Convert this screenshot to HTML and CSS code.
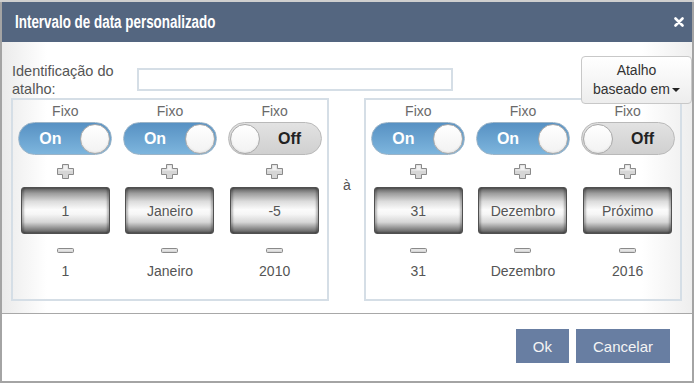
FILE: index.html
```html
<!DOCTYPE html>
<html lang="pt">
<head>
    <meta charset="UTF-8">
    <title>Intervalo de data personalizado</title>
    <link rel="stylesheet" href="styles.css">
</head>
<body>
    <div class="dialog">
        <!-- Header -->
        <div class="dialog-header">
            <div class="dialog-title">Intervalo de data personalizado</div>
            <button class="close-btn" aria-label="Fechar">
                <svg width="10" height="10" viewBox="0 0 10 10"><path d="M1.5 1.5 L8.5 8.5 M8.5 1.5 L1.5 8.5" stroke="#fff" stroke-width="2.6" stroke-linecap="round"/></svg>
            </button>
        </div>

        <!-- Body -->
        <div class="dialog-body">
            <div class="name-row">
                <label class="name-label" for="shortcutName">Identificação do atalho:</label>
                <input type="text" id="shortcutName" class="name-input">
            </div>

            <button class="base-btn">Atalho<br>baseado em<span class="caret"></span></button>

            <div class="range-row">
                <!-- From -->
                <div class="panel">
                    <div class="col">
                        <div class="fixo">Fixo</div>
                        <div class="toggle on"><span class="toggle-text">On</span><span class="knob"></span></div>
                        <button class="step"><svg width="17" height="15" viewBox="0 0 17 15"><path d="M5.5 0.5h6v4h5v6h-5v4h-6v-4h-5v-6h5z" fill="#d6d6d6" stroke="#8a8a8a"/><path d="M6.5 1.5h4v4h5v1h-9zM1.5 5.5h5v1h-5z" fill="#f2f2f2"/></svg></button>
                        <div class="spin">1</div>
                        <button class="step minus"><svg width="17" height="5" viewBox="0 0 17 5"><rect x="0.5" y="0.5" width="16" height="4" rx="1" fill="#d6d6d6" stroke="#8a8a8a"/><rect x="1.5" y="1.5" width="14" height="1" fill="#f2f2f2"/></svg></button>
                        <div class="val">1</div>
                    </div>
                    <div class="col">
                        <div class="fixo">Fixo</div>
                        <div class="toggle on"><span class="toggle-text">On</span><span class="knob"></span></div>
                        <button class="step"><svg width="17" height="15" viewBox="0 0 17 15"><path d="M5.5 0.5h6v4h5v6h-5v4h-6v-4h-5v-6h5z" fill="#d6d6d6" stroke="#8a8a8a"/><path d="M6.5 1.5h4v4h5v1h-9zM1.5 5.5h5v1h-5z" fill="#f2f2f2"/></svg></button>
                        <div class="spin">Janeiro</div>
                        <button class="step minus"><svg width="17" height="5" viewBox="0 0 17 5"><rect x="0.5" y="0.5" width="16" height="4" rx="1" fill="#d6d6d6" stroke="#8a8a8a"/><rect x="1.5" y="1.5" width="14" height="1" fill="#f2f2f2"/></svg></button>
                        <div class="val">Janeiro</div>
                    </div>
                    <div class="col">
                        <div class="fixo">Fixo</div>
                        <div class="toggle off"><span class="knob"></span><span class="toggle-text">Off</span></div>
                        <button class="step"><svg width="17" height="15" viewBox="0 0 17 15"><path d="M5.5 0.5h6v4h5v6h-5v4h-6v-4h-5v-6h5z" fill="#d6d6d6" stroke="#8a8a8a"/><path d="M6.5 1.5h4v4h5v1h-9zM1.5 5.5h5v1h-5z" fill="#f2f2f2"/></svg></button>
                        <div class="spin">-5</div>
                        <button class="step minus"><svg width="17" height="5" viewBox="0 0 17 5"><rect x="0.5" y="0.5" width="16" height="4" rx="1" fill="#d6d6d6" stroke="#8a8a8a"/><rect x="1.5" y="1.5" width="14" height="1" fill="#f2f2f2"/></svg></button>
                        <div class="val">2010</div>
                    </div>
                </div>

                <div class="range-sep">à</div>

                <!-- To -->
                <div class="panel">
                    <div class="col">
                        <div class="fixo">Fixo</div>
                        <div class="toggle on"><span class="toggle-text">On</span><span class="knob"></span></div>
                        <button class="step"><svg width="17" height="15" viewBox="0 0 17 15"><path d="M5.5 0.5h6v4h5v6h-5v4h-6v-4h-5v-6h5z" fill="#d6d6d6" stroke="#8a8a8a"/><path d="M6.5 1.5h4v4h5v1h-9zM1.5 5.5h5v1h-5z" fill="#f2f2f2"/></svg></button>
                        <div class="spin">31</div>
                        <button class="step minus"><svg width="17" height="5" viewBox="0 0 17 5"><rect x="0.5" y="0.5" width="16" height="4" rx="1" fill="#d6d6d6" stroke="#8a8a8a"/><rect x="1.5" y="1.5" width="14" height="1" fill="#f2f2f2"/></svg></button>
                        <div class="val">31</div>
                    </div>
                    <div class="col">
                        <div class="fixo">Fixo</div>
                        <div class="toggle on"><span class="toggle-text">On</span><span class="knob"></span></div>
                        <button class="step"><svg width="17" height="15" viewBox="0 0 17 15"><path d="M5.5 0.5h6v4h5v6h-5v4h-6v-4h-5v-6h5z" fill="#d6d6d6" stroke="#8a8a8a"/><path d="M6.5 1.5h4v4h5v1h-9zM1.5 5.5h5v1h-5z" fill="#f2f2f2"/></svg></button>
                        <div class="spin">Dezembro</div>
                        <button class="step minus"><svg width="17" height="5" viewBox="0 0 17 5"><rect x="0.5" y="0.5" width="16" height="4" rx="1" fill="#d6d6d6" stroke="#8a8a8a"/><rect x="1.5" y="1.5" width="14" height="1" fill="#f2f2f2"/></svg></button>
                        <div class="val">Dezembro</div>
                    </div>
                    <div class="col">
                        <div class="fixo">Fixo</div>
                        <div class="toggle off"><span class="knob"></span><span class="toggle-text">Off</span></div>
                        <button class="step"><svg width="17" height="15" viewBox="0 0 17 15"><path d="M5.5 0.5h6v4h5v6h-5v4h-6v-4h-5v-6h5z" fill="#d6d6d6" stroke="#8a8a8a"/><path d="M6.5 1.5h4v4h5v1h-9zM1.5 5.5h5v1h-5z" fill="#f2f2f2"/></svg></button>
                        <div class="spin">Próximo</div>
                        <button class="step minus"><svg width="17" height="5" viewBox="0 0 17 5"><rect x="0.5" y="0.5" width="16" height="4" rx="1" fill="#d6d6d6" stroke="#8a8a8a"/><rect x="1.5" y="1.5" width="14" height="1" fill="#f2f2f2"/></svg></button>
                        <div class="val">2016</div>
                    </div>
                </div>
            </div>
        </div>

        <!-- Footer -->
        <div class="dialog-footer">
            <button class="footer-btn">Ok</button>
            <button class="footer-btn">Cancelar</button>
        </div>
    </div>
</body>
</html>
```

FILE: styles.css
```css
* {
    margin: 0;
    padding: 0;
    box-sizing: border-box;
    font-family: "Liberation Sans", Arial, sans-serif;
}

body {
    background-color: #cfcfcf;
    width: 694px;
    height: 383px;
    overflow: hidden;
}

.dialog {
    margin-top: 2px;
    width: 694px;
    height: 381px;
    background-color: white;
    border: 2px solid #a4a4a4;
    border-top: none;
}

.dialog-header {
    background-color: #546680;
    height: 40px;
    display: flex;
    align-items: center;
    justify-content: space-between;
    padding: 0 8px 0 13px;
}

.dialog-title {
    color: white;
    font-weight: bold;
    font-size: 18px;
    transform: scaleX(0.745);
    transform-origin: left center;
}

.close-btn {
    background: none;
    border: none;
    display: flex;
    cursor: pointer;
}

.dialog-body {
    position: relative;
    height: 272px;
    padding: 20px 0 0 9px;
    background: linear-gradient(to right, #ebebeb 0, #ffffff 45px, #ffffff 640px, #eeeeee 690px);
    border-bottom: 1px solid #a8a8a8;
}

.name-row {
    display: flex;
    align-items: flex-start;
}

.name-label {
    width: 126px;
    padding-left: 1px;
    font-size: 14.5px;
    line-height: 18px;
    color: #555;
}

.name-input {
    margin-top: 6px;
    width: 316px;
    height: 23px;
    border: 2px solid #d5dee6;
    outline: none;
}

.base-btn {
    position: absolute;
    top: 14px;
    right: 0;
    width: 111px;
    height: 48px;
    border: 1px solid #c8c8c8;
    border-radius: 4px;
    background: linear-gradient(#ffffff, #ededed);
    font-size: 14px;
    line-height: 19px;
    color: #333;
    cursor: pointer;
    z-index: 2;
}

.caret {
    display: inline-block;
    margin-left: 2px;
    vertical-align: middle;
    border-top: 4px solid #222;
    border-left: 4px solid transparent;
    border-right: 4px solid transparent;
}

.range-row {
    display: flex;
}

.panel {
    width: 318px;
    height: 203px;
    border: 2px solid #d5dee6;
    display: grid;
    grid-template-columns: repeat(3, 1fr);
}

.range-sep {
    width: 35px;
    padding-top: 79px;
    padding-left: 1px;
    text-align: center;
    font-size: 14px;
    color: #555;
}

.col {
    display: flex;
    flex-direction: column;
    align-items: center;
    padding-top: 2px;
}

.fixo {
    font-size: 14px;
    line-height: 18px;
    color: #6a6a6a;
}

.toggle {
    margin-top: 2px;
    width: 94px;
    height: 33px;
    border-radius: 17px;
    display: flex;
    align-items: center;
    padding: 0 1px;
}

.toggle.on {
    background: linear-gradient(#5791c3, #7db5dd);
    border: 1px solid #9bb4c8;
}

.toggle.off {
    background: linear-gradient(#e2e2e2, #d0d0d0);
    border: 1px solid #b9b9b9;
}

.toggle-text {
    flex: 1;
    text-align: center;
    font-size: 16px;
    font-weight: bold;
}

.toggle.on .toggle-text {
    color: white;
}

.toggle.off .toggle-text {
    color: #222;
}

.knob {
    width: 30px;
    height: 30px;
    border-radius: 50%;
    background: linear-gradient(#ffffff, #f2f2f2);
    border: 1px solid #a9a9a9;
    box-shadow: inset 0 -1px 2px rgba(0,0,0,0.08);
}

.step {
    margin-top: 9px;
    background: none;
    border: none;
    display: flex;
    cursor: pointer;
}

.step.minus {
    margin-top: 14px;
}

.spin {
    margin-top: 8px;
    width: 89px;
    height: 47px;
    border: 1px solid #505050;
    border-radius: 3px;
    background: linear-gradient(#5d5d5d 0%, #9d9d9d 12%, #dcdcdc 30%, #fbfbfb 48%, #f6f6f6 58%, #d6d6d6 76%, #8d8d8d 90%, #5a5a5a 100%);
    box-shadow: inset 2px 0 2px rgba(0,0,0,0.25), inset -2px 0 2px rgba(0,0,0,0.25);
    display: flex;
    align-items: center;
    justify-content: center;
    font-size: 14px;
    color: #555;
}

.val {
    margin-top: 9px;
    font-size: 14px;
    line-height: 18px;
    color: #555;
}

.dialog-footer {
    display: flex;
    justify-content: flex-end;
    gap: 7px;
    padding: 15px 22px 0 0;
}

.footer-btn {
    height: 34px;
    padding: 0 17px;
    background-color: #687ea2;
    color: #f4f4f4;
    border: none;
    font-size: 15px;
    cursor: pointer;
}
```
